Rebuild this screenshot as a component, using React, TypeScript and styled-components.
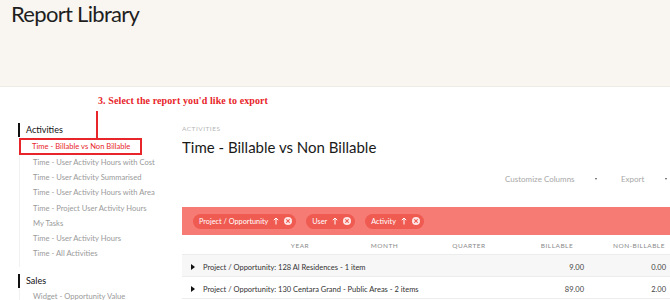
import React from "react";
import styled, { createGlobalStyle } from "styled-components";

const GlobalStyle = createGlobalStyle`
    html, body {
        margin: 0;
        padding: 0;
        background: #ffffff;
        overflow: hidden;
    }
    body {
        font-family: "Lato", "Liberation Sans", sans-serif;
        color: #222;
    }
`;

const activities = [
    "Time - Billable vs Non Billable",
    "Time - User Activity Hours with Cost",
    "Time - User Activity Summarised",
    "Time - User Activity Hours with Area",
    "Time - Project User Activity Hours",
    "My Tasks",
    "Time - User Activity Hours",
    "Time - All Activities",
];

const chips = ["Project / Opportunity", "User", "Activity"];

const rows = [
    { label: "Project / Opportunity: 128 Al Residences - 1 item", billable: "9.00", non: "0.00" },
    { label: "Project / Opportunity: 130 Centara Grand - Public Areas - 2 items", billable: "89.00", non: "2.00" },
];

const CloseIcon = () => (
    <svg width="8" height="8" viewBox="0 0 10 10">
        <circle cx="5" cy="5" r="5" fill="#ffffff" fillOpacity="0.85" />
        <path d="M3.3 3.3 L6.7 6.7 M6.7 3.3 L3.3 6.7" stroke="#ef5b52" strokeWidth="1.3" strokeLinecap="round" />
    </svg>
);

const UpArrow = () => (
    <svg width="6" height="8" viewBox="0 0 6 8">
        <path d="M3 7.5 V1 M0.8 3.2 L3 1 L5.2 3.2" stroke="#ffffff" strokeWidth="1" fill="none" />
    </svg>
);

export default function App() {
    return (
        <>
            <GlobalStyle />
            <Header>
                <Title>Report Library</Title>
            </Header>
            <Body>
                <Note>3. Select the report you'd like to export</Note>
                <NoteLine />
                <Sidebar>
                    <Group>
                        <GroupTitle>Activities</GroupTitle>
                        <ItemList>
                            {activities.map((a, i) => (
                                <Item key={a} $active={i === 0}>{a}</Item>
                            ))}
                        </ItemList>
                    </Group>
                    <Group>
                        <GroupTitle>Sales</GroupTitle>
                        <ItemList>
                            <Item>Widget - Opportunity Value</Item>
                        </ItemList>
                    </Group>
                </Sidebar>
                <Main>
                    <Crumb>ACTIVITIES</Crumb>
                    <ReportTitle>Time - Billable vs Non Billable</ReportTitle>
                    <Toolbar>
                        <Dropdown $width={92}>Customize Columns<Caret /></Dropdown>
                        <Dropdown $width={46}>Export<Caret /></Dropdown>
                    </Toolbar>
                    <GroupBar>
                        {chips.map((c) => (
                            <Chip key={c}>
                                {c}
                                <UpArrow />
                                <CloseIcon />
                            </Chip>
                        ))}
                    </GroupBar>
                    <HeadRow>
                        <span />
                        <HeadCell>YEAR</HeadCell>
                        <HeadCell>MONTH</HeadCell>
                        <HeadCell>QUARTER</HeadCell>
                        <HeadCell $shift={10}>BILLABLE</HeadCell>
                        <HeadCell $shift={10}>NON-BILLABLE</HeadCell>
                    </HeadRow>
                    {rows.map((r, i) => (
                        <DataRow key={r.label} $striped={i % 2 === 0}>
                            <RowLabel>
                                <Triangle />
                                {r.label}
                            </RowLabel>
                            <Value>{r.billable}</Value>
                            <Value>{r.non}</Value>
                        </DataRow>
                    ))}
                </Main>
            </Body>
        </>
    );
}

const Header = styled.header`
    height: 86px;
    background: #f9f6f1;
    padding-left: 11px;
    box-sizing: border-box;
`;

const Title = styled.h1`
    margin: 0;
    font-family: "Lato", sans-serif;
    font-weight: 400;
    font-size: 22px;
    line-height: 27px;
    letter-spacing: -0.7px;
    color: #1f1f1f;
`;

const Body = styled.div`
    position: relative;
    display: flex;
    height: 214px;
    border-top: 1px solid #efece6;
`;

const Note = styled.div`
    position: absolute;
    left: 98px;
    top: 8px;
    font-family: "Liberation Serif", serif;
    font-weight: 700;
    font-size: 10px;
    color: #e8252a;
    letter-spacing: 0.1px;
`;

const NoteLine = styled.div`
    position: absolute;
    left: 96px;
    top: 24px;
    width: 2px;
    height: 29px;
    background: #e8252a;
`;

const Sidebar = styled.aside`
    width: 164px;
    padding-left: 18px;
    padding-top: 36px;
    display: flex;
    flex-direction: column;
    gap: 7px;
`;

const Group = styled.section``;

const GroupTitle = styled.div`
    border-left: 2px solid #111;
    padding-left: 6px;
    font-size: 9px;
    line-height: 14px;
    color: #111;
    margin-bottom: 1px;
`;

const ItemList = styled.div`
    display: flex;
    flex-direction: column;
    border-left: 1px solid #f1f1f1;
    margin-left: 1px;
    padding: 0 0 6px;
`;

const Item = styled.div<{ $active?: boolean }>`
    font-size: 7.6px;
    line-height: 15.2px;
    padding-left: 13px;
    color: ${(p) => (p.$active ? "#e8252a" : "#9a9a9a")};
    ${(p) =>
        p.$active &&
        `
        border: 2px solid #e8252a;
        width: 108px;
        line-height: 13px;
        padding-left: 11px;
        margin-left: -1px;
    `}
`;

const Main = styled.main`
    flex: 1;
    padding-top: 38px;
    overflow: hidden;
    min-width: 0;
`;

const Crumb = styled.div`
    font-size: 6.5px;
    letter-spacing: 0.5px;
    color: #b5b5b5;
    line-height: 8px;
`;

const ReportTitle = styled.h2`
    margin: 5px 0 0;
    font-weight: 400;
    font-size: 15px;
    line-height: 18px;
    color: #1a1a1a;
`;

const Toolbar = styled.div`
    display: flex;
    justify-content: flex-end;
    gap: 24px;
    margin-top: 18px;
    height: 33px;
    padding-right: 3px;
`;

const Dropdown = styled.div<{ $width: number }>`
    width: ${(p) => p.$width}px;
    display: flex;
    justify-content: space-between;
    align-items: flex-start;
    font-size: 8px;
    line-height: 10px;
    color: #a8a8a8;
`;

const Caret = styled.span`
    margin-top: 4px;
    width: 0;
    height: 0;
    border-left: 1.5px solid transparent;
    border-right: 1.5px solid transparent;
    border-top: 2px solid #555;
`;

const GroupBar = styled.div`
    background: #f67b74;
    height: 28px;
    display: flex;
    align-items: center;
    gap: 10px;
    padding-left: 11px;
`;

const Chip = styled.div`
    display: flex;
    align-items: center;
    gap: 5px;
    height: 15px;
    padding: 0 4px 0 6px;
    border-radius: 8px;
    background: #ef5a51;
    color: #ffffff;
    font-size: 7.3px;
    svg {
        flex-shrink: 0;
    }
`;

const columns = "76px 84px 85px 84px 82px 82px";

const HeadRow = styled.div`
    display: grid;
    grid-template-columns: ${columns};
    height: 20px;
    padding-top: 2px;
    align-items: center;
    border-bottom: 1px solid #ececec;
    box-sizing: border-box;
`;

const HeadCell = styled.div<{ $shift?: number }>`
    text-align: center;
    font-size: 6.5px;
    letter-spacing: 0.5px;
    color: #8a8a8a;
    padding-left: ${(p) => p.$shift ?? 0}px;
`;

const DataRow = styled.div<{ $striped?: boolean }>`
    display: grid;
    grid-template-columns: ${columns};
    height: 22px;
    padding-top: 3px;
    align-items: center;
    border-bottom: 1px solid #ececec;
    box-sizing: border-box;
    background: ${(p) => (p.$striped ? "#f7f7f7" : "#ffffff")};
`;

const RowLabel = styled.div`
    grid-column: 1 / 5;
    display: flex;
    align-items: center;
    gap: 8px;
    padding-left: 9px;
    font-size: 7.5px;
    color: #333;
    white-space: nowrap;
`;

const Triangle = styled.span`
    width: 0;
    height: 0;
    border-top: 3px solid transparent;
    border-bottom: 3px solid transparent;
    border-left: 4px solid #111;
`;

const Value = styled.div`
    text-align: right;
    padding-right: 9px;
    font-size: 7.5px;
    color: #444;
`;
